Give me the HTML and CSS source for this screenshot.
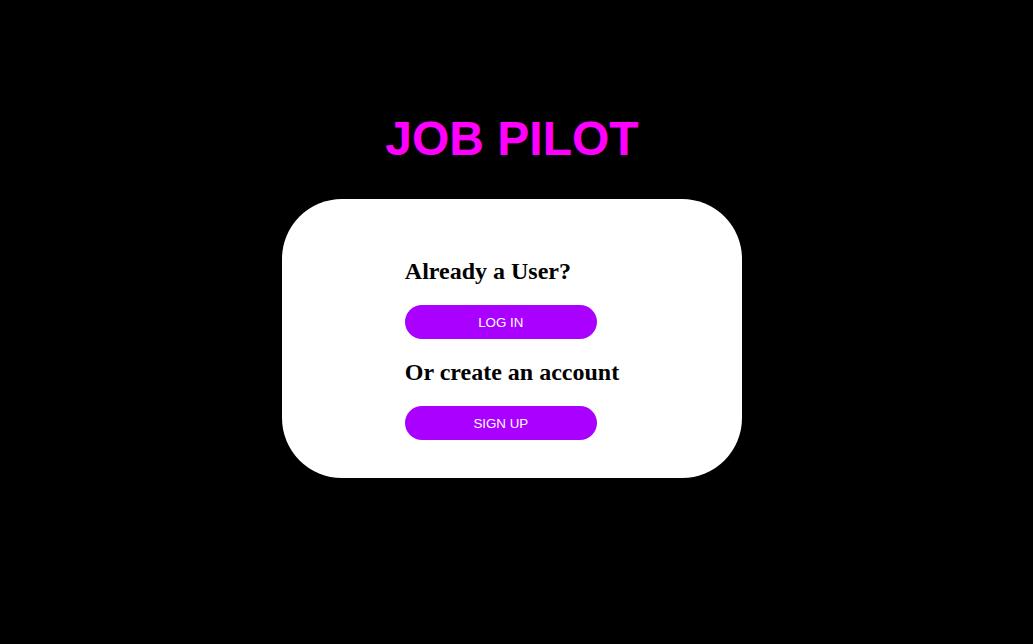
FILE: index.html
```html
<!DOCTYPE html>
<html lang="en">
<head>
<meta charset="utf-8">
<title>Job Pilot</title>
<link rel="stylesheet" href="styles.css">
</head>
<body>
<main class="page">
  <h1 class="title">JOB PILOT</h1>
  <section class="card">
    <div class="card-inner">
      <h2 class="prompt">Already a User?</h2>
      <button class="pill-btn" type="button">LOG IN</button>
      <h2 class="prompt">Or create an account</h2>
      <button class="pill-btn" type="button">SIGN UP</button>
    </div>
  </section>
</main>
</body>
</html>
```
FILE: styles.css
```css
html, body {
  margin: 0;
  padding: 0;
  background: #000;
}
body {
  width: 1033px;
  height: 644px;
  overflow: hidden;
}
.page {
  width: 1024px;
  display: flex;
  flex-direction: column;
  align-items: center;
  padding-top: 111px;
}
.title {
  margin: 0 0 33px 0;
  font-family: "Liberation Sans", Arial, sans-serif;
  font-weight: bold;
  font-size: 48px;
  line-height: 55px;
  color: #ff00ff;
}
.card {
  width: 460px;
  box-sizing: border-box;
  background: #fff;
  border-radius: 60px;
  padding: 39px 0 38px 0;
  display: flex;
  justify-content: center;
}
.card-inner {
  display: flex;
  flex-direction: column;
  align-items: stretch;
}
.prompt {
  margin: 20px 0;
  font-family: "Liberation Serif", "Times New Roman", serif;
  font-weight: bold;
  font-size: 24px;
  line-height: 27px;
  color: #000;
}
.pill-btn {
  width: 192px;
  height: 34px;
  border: none;
  border-radius: 17px;
  background: #aa00ff;
  color: #fff;
  font-family: "Liberation Sans", Arial, sans-serif;
  font-size: 13.33px;
  padding: 0;
  cursor: pointer;
}
```
